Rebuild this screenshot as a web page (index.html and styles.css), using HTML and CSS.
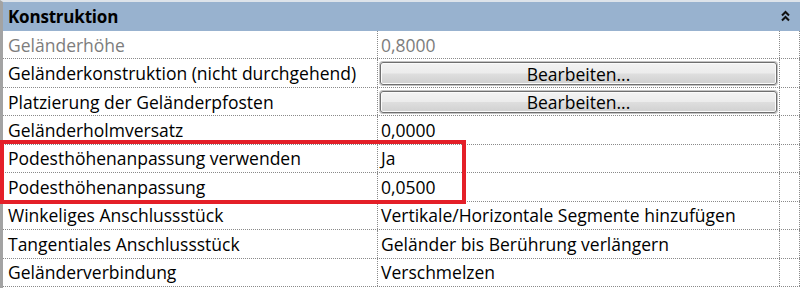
FILE: index.html
```html
<!DOCTYPE html>
<html>
<head>
<meta charset="utf-8">
<link rel="stylesheet" href="styles.css">
</head>
<body>
<div class="panel">
  <div class="hdr">
    <span class="hdr-title">Konstruktion</span>
    <svg class="chev" width="9" height="12" viewBox="0 0 9 12">
      <path d="M1 5.5 L4.5 2 L8 5.5 M1 10.5 L4.5 7 L8 10.5" fill="none" stroke="#111" stroke-width="2"/>
    </svg>
  </div>
  <div class="rows">
    <div class="row ro"><div class="lbl">Geländerhöhe</div><div class="val">0,8000</div><div class="pad"></div></div>
    <div class="row"><div class="lbl">Geländerkonstruktion (nicht durchgehend)</div><div class="val btncell"><div class="btn">Bearbeiten...</div></div><div class="pad"></div></div>
    <div class="row"><div class="lbl">Platzierung der Geländerpfosten</div><div class="val btncell"><div class="btn">Bearbeiten...</div></div><div class="pad"></div></div>
    <div class="row"><div class="lbl">Geländerholmversatz</div><div class="val">0,0000</div><div class="pad"></div></div>
    <div class="row"><div class="lbl">Podesthöhenanpassung verwenden</div><div class="val">Ja</div><div class="pad"></div></div>
    <div class="row"><div class="lbl">Podesthöhenanpassung</div><div class="val">0,0500</div><div class="pad"></div></div>
    <div class="row"><div class="lbl">Winkeliges Anschlussstück</div><div class="val">Vertikale/Horizontale Segmente hinzufügen</div><div class="pad"></div></div>
    <div class="row"><div class="lbl">Tangentiales Anschlussstück</div><div class="val">Geländer bis Berührung verlängern</div><div class="pad"></div></div>
    <div class="row"><div class="lbl">Geländerverbindung</div><div class="val">Verschmelzen</div><div class="pad"></div></div>
  </div>
  <div class="highlight"></div>
</div>
</body>
</html>
```
FILE: styles.css
```css
html, body {
  margin: 0;
  padding: 0;
  background: #ffffff;
}
body {
  width: 800px;
  height: 288px;
  overflow: hidden;
  font-family: "Open Sans", "Noto Sans", sans-serif;
  font-size: 17.5px;
  line-height: 20px;
  color: #000;
}
.panel {
  position: relative;
  width: 797px;
  height: 286px;
  border-top: 2px solid #dde3ea;
  border-left: 3px solid #a3a3a3;
}
.hdr {
  height: 29px;
  background: #98b2cf;
  display: flex;
  align-items: center;
  justify-content: space-between;
  padding: 0 10px 0 5px;
}
.hdr-title {
  font-weight: 700;
  font-size: 17px;
  letter-spacing: -0.2px;
}
.chev {
  display: block;
  margin-top: -2px;
}
.rows {
  height: 256px;
  display: grid;
  grid-template-rows: repeat(9, minmax(0, 1fr));
}
.row {
  display: grid;
  grid-template-columns: 375px 402px 20px;
  border-bottom: 1px dotted #8a8a8a;
  min-height: 0;
}
.lbl, .val, .pad {
  display: flex;
  align-items: center;
  white-space: nowrap;
  overflow: hidden;
  min-height: 0;
}
.lbl {
  padding-left: 5px;
  border-right: 1px dotted #8a8a8a;
}
.val {
  padding-left: 3px;
  border-right: 1px dotted #8a8a8a;
}
.pad {
  border-right: 1px dotted #8a8a8a;
}
.ro .lbl, .ro .val {
  color: #7d7d7d;
}
.btncell {
  padding: 2px 1px 1px 2px;
  align-items: stretch;
}
.btn {
  flex: 1;
  display: flex;
  align-items: center;
  justify-content: center;
  border: 1px solid #6f6f6f;
  border-radius: 3px;
  box-shadow: inset 0 0 0 1px #fbfbfb, 0 0 0 1px #c4c4c4;
  background: linear-gradient(#f3f3f3 0%, #ececec 48%, #dedede 52%, #d0d0d0 100%);
  margin: 1px 1px 1px 0;
}
.highlight {
  position: absolute;
  left: -3px;
  top: 138px;
  width: 458px;
  height: 56px;
  border: 4px solid #e41f28;
  pointer-events: none;
}
```
